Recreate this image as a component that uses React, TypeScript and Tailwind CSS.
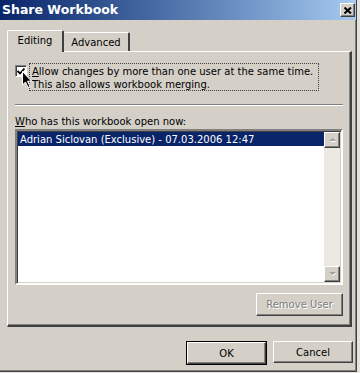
import { ReactNode } from 'react';

const raised = 'border border-t-white border-l-white border-r-[#404040] border-b-[#404040] shadow-[inset_-1px_-1px_0_#808080,inset_1px_1px_0_#d4d0c8]';

const Button = ({ children, className = '', disabled = false }: { children: ReactNode; className?: string; disabled?: boolean }) => (
    <div className={`h-[22px] bg-[#d4d0c8] flex items-center justify-center ${raised} ${className}`}>
        {disabled ? (
            <span className="text-[#808080] [text-shadow:1px_1px_0_#ffffff]">{children}</span>
        ) : (
            <span className="text-black">{children}</span>
        )}
    </div>
);

const Arrow = ({ up }: { up: boolean }) => (
    <div className={`w-[16px] h-[16px] bg-[#d4d0c8] flex items-center justify-center ${raised}`}>
        <svg width="7" height="4" viewBox="0 0 7 4">
            {up ? (
                <>
                    <path d="M1 4 L4 1 L7 4 Z" fill="#ffffff" />
                    <path d="M0 3 L3.5 0 L7 3 Z" fill="#a0a0a0" />
                </>
            ) : (
                <>
                    <path d="M1 1 L7 1 L4 4 Z" fill="#ffffff" />
                    <path d="M0 0 L7 0 L3.5 3 Z" fill="#a0a0a0" />
                </>
            )}
        </svg>
    </div>
);

export default function App() {
    return (
        <div className="w-[360px] h-[373px] bg-[#e4e2dd] font-['DejaVu_Sans',sans-serif] text-[10px] leading-[13px] text-black">
            <div className="relative w-[357px] h-[372px] bg-[#d4d0c8] border-r border-b border-r-[#404040] border-b-[#404040] shadow-[inset_-1px_-1px_0_#808080]">
                {/* Title bar */}
                <div className="h-[20px] bg-gradient-to-r from-[#0a246a] to-[#a6caf0] flex items-center justify-between pl-[2px] pr-[1px]">
                    <span className="text-white font-bold text-[12.5px] leading-[16px]">Share Workbook</span>
                    <div className={`w-[15px] h-[14px] bg-[#d4d0c8] flex items-center justify-center ${raised}`}>
                        <svg width="8" height="7" viewBox="0 0 8 7">
                            <path d="M0.5 0.5 L7 6.5 M7 0.5 L0.5 6.5" stroke="#000" strokeWidth="2" />
                        </svg>
                    </div>
                </div>

                <div className="pt-[10px] pl-[7px]">
                    {/* Tabs */}
                    <div className="flex items-end h-[21px] relative z-10">
                        <div className="w-[57px] h-[22px] -mb-px bg-[#d4d0c8] border-l border-t border-r-2 border-l-white border-t-white border-r-[#404040] rounded-t-[2px] flex items-center justify-center pb-[3px]">
                            Editing
                        </div>
                        <div className="w-[66px] h-[19px] bg-[#d4d0c8] border-t border-r-2 border-t-white border-r-[#404040] rounded-t-[2px] flex items-center justify-center">
                            Advanced
                        </div>
                    </div>

                    {/* Panel */}
                    <div className="w-[345px] h-[276px] border-l border-t border-r-2 border-b-2 border-l-white border-t-white border-r-[#404040] border-b-[#404040] shadow-[inset_-1px_-1px_0_#808080] pl-[7px] pr-[7px] pt-[11px]">
                        <div className="relative flex items-start">
                            <div className="mt-[2px] w-[12px] h-[12px] bg-white border border-t-[#808080] border-l-[#808080] border-r-white border-b-white shadow-[inset_1px_1px_0_#404040] flex items-center justify-center">
                                <svg width="8" height="7" viewBox="0 0 8 7">
                                    <path d="M0.5 3 L3 5.5 L7.5 0.5" stroke="#000" strokeWidth="1.8" fill="none" />
                                </svg>
                            </div>
                            <div className="ml-[2px] w-[290px] h-[28px] border border-dotted border-[#404040] pl-[2px] pt-px">
                                <div><span className="underline">A</span>llow changes by more than one user at the same time.</div>
                                <div>This also allows workbook merging.</div>
                            </div>
                            <svg className="absolute left-[7px] top-[8px]" width="11" height="18" viewBox="0 0 11 18">
                                <path d="M0.5 0.5 L0.5 14 L3.5 11 L6 16.5 L8 15.5 L5.5 10.2 L9.5 10.2 Z" fill="#000" stroke="#fff" strokeWidth="1" />
                            </svg>
                        </div>

                        <div className="mt-[13px] border-t border-b border-t-[#808080] border-b-white" />

                        <div className="mt-[9px]">
                            <span className="underline">W</span>ho has this workbook open now:
                        </div>

                        <div className="mt-[1px] h-[156px] flex border-2 border-t-[#808080] border-l-[#808080] border-r-white border-b-white shadow-[inset_1px_1px_0_#404040,inset_-1px_-1px_0_#d4d0c8] p-[1px]">
                            <div className="flex-1 bg-white">
                                <div className="h-[14px] bg-[#0a246a] text-white pl-[2px] flex items-center">
                                    Adrian Siclovan (Exclusive) - 07.03.2006 12:47
                                </div>
                            </div>
                            <div className="w-[16px] flex flex-col bg-[#ece9e4]">
                                <Arrow up />
                                <div className="flex-1" />
                                <Arrow up={false} />
                            </div>
                        </div>

                        <div className="mt-[8px] flex justify-end">
                            <Button disabled className="w-[87px] h-[23px]">Remove User</Button>
                        </div>
                    </div>

                    {/* Dialog buttons */}
                    <div className="mt-[14px] flex justify-end gap-[6px] pr-[3px]">
                        <div className="border border-black">
                            <Button className="w-[79px] h-[20px]">OK</Button>
                        </div>
                        <Button className="w-[80px]">Cancel</Button>
                    </div>
                </div>
            </div>
        </div>
    );
}
